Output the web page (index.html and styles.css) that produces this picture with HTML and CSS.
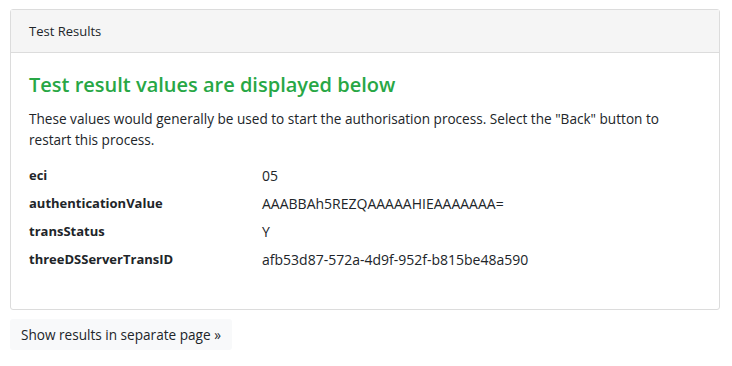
FILE: index.html
```html
<!DOCTYPE html>
<html lang="en">
<head>
    <meta charset="UTF-8">
    <title>Test Results</title>
    <link rel="stylesheet" href="styles.css">
</head>
<body>
    <div class="page">
        <div class="card">
            <div class="card-header">Test Results</div>
            <div class="card-body">
                <h2 class="result-title">Test result values are displayed below</h2>
                <p class="intro">These values would generally be used to start the authorisation process. Select the "Back" button to restart this process.</p>
                <div class="results">
                    <div class="result-row">
                        <span class="result-key">eci</span>
                        <span class="result-value">05</span>
                    </div>
                    <div class="result-row">
                        <span class="result-key">authenticationValue</span>
                        <span class="result-value">AAABBAh5REZQAAAAAHIEAAAAAAA=</span>
                    </div>
                    <div class="result-row">
                        <span class="result-key">transStatus</span>
                        <span class="result-value">Y</span>
                    </div>
                    <div class="result-row">
                        <span class="result-key">threeDSServerTransID</span>
                        <span class="result-value">afb53d87-572a-4d9f-952f-b815be48a590</span>
                    </div>
                </div>
            </div>
        </div>
        <a class="btn-light" href="#">Show results in separate page &raquo;</a>
    </div>
</body>
</html>
```

FILE: styles.css
```css
body {
    margin: 0;
    font-family: "Open Sans", "Noto Sans", sans-serif;
    font-size: 14px;
    color: #212529;
    background-color: #fff;
}

.page {
    padding: 9px 12px 9px 10px;
}

.card {
    border: 1px solid #dcdcdc;
    border-radius: 3px;
    margin-bottom: 9px;
}

.card-header {
    background-color: #f5f5f5;
    border-bottom: 1px solid #dcdcdc;
    height: 42px;
    line-height: 42px;
    padding: 0 18px;
    font-size: 13px;
}

.card-body {
    padding: 16px 18px 36px;
}

.result-title {
    margin: 0 0 7px;
    color: #28a745;
    font-size: 20px;
    font-weight: 600;
    line-height: 32px;
}

.intro {
    margin: 0 0 11px;
    font-size: 13.6px;
    line-height: 21px;
}

.result-row {
    display: flex;
    height: 28px;
    align-items: center;
}

.result-key {
    width: 233px;
    font-size: 13px;
    font-weight: 700;
}

.btn-light {
    display: inline-block;
    background-color: #f8f9fa;
    color: #212529;
    text-decoration: none;
    border-radius: 3px;
    padding: 0 11px;
    height: 31px;
    line-height: 31px;
    font-size: 13.6px;
}
```
